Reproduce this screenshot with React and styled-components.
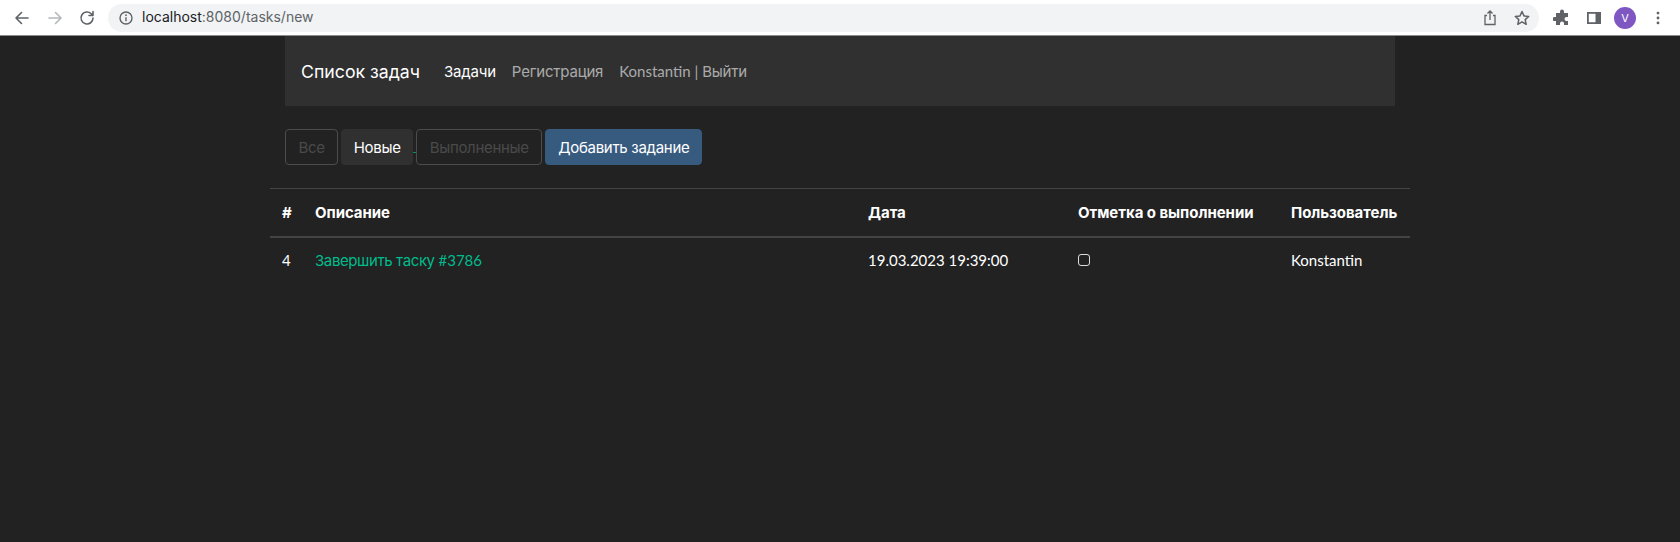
import React from 'react';
import styled, { createGlobalStyle } from 'styled-components';

const Global = createGlobalStyle`
  html, body { margin: 0; padding: 0; background: #222222; }
  body { font-family: Inter, "Noto Sans", sans-serif; font-size: 15px; color: #fff; height: 542px; overflow: hidden; }
  * { box-sizing: border-box; }
`;

const Chrome = styled.header`
  height: 36px; background: #fff; display: flex; align-items: center;
  border-bottom: 1px solid #8a8a8a; padding-left: 13px;
`;
const NavIcon = styled.svg`
  width: ${p => p.$size || 18}px; height: ${p => p.$size || 18}px; flex: none;
  color: ${p => p.$color || '#5f6368'}; margin-right: ${p => p.$gap ?? 0}px; display: block;
`;
const Omnibox = styled.div`
  margin-left: 12px; width: 1431px; height: 28px; border-radius: 14px; background: #f1f3f4;
  display: flex; align-items: center; padding-left: 10px; margin-right: 14px;
`;
const Url = styled.span`
  font-family: Inter, "Liberation Sans", sans-serif; font-size: 14px; color: #5f6368; margin-left: 8px; flex: 1;
  margin-top: -2px;
  b { font-weight: 400; color: #202124; }
`;
const Avatar = styled.div`
  width: 22px; height: 22px; border-radius: 50%; background: #7e57c2; color: #fff;
  font: 11px Inter, sans-serif; display: flex; align-items: center; justify-content: center;
  margin-right: 14px;
`;
const Container = styled.main`
  width: 1140px; margin: 0 auto; padding: 0 15px;
`;
const Navbar = styled.nav`
  height: 70px; background: #303030; display: flex; align-items: center; padding-left: 16px;
`;
const Brand = styled.a`
  font-size: 17.7px; color: #fff; margin-right: 24px;
`;
const NavLink = styled.a`
  font-size: 15px; letter-spacing: -0.2px; color: ${p => p.$active ? '#fff' : 'rgba(255,255,255,0.6)'}; margin-right: 16px;
`;
const Latin = styled.span`
  font-family: Lato, sans-serif; letter-spacing: 0;
`;
const Filters = styled.div`
  display: flex; margin-top: 23px; height: 36px;
`;
const FilterBtn = styled.button`
  font: inherit; letter-spacing: -0.3px; height: 36px; padding: 0 ${p => p.$pad ?? 12}px; border-radius: 4px; margin-right: ${p => p.$mr ?? 3}px;
  border: 1px solid ${p => p.$kind === 'primary' ? '#375a7f' : p.$kind === 'active' ? '#303030' : '#4c4c4c'};
  background: ${p => p.$kind === 'primary' ? '#375a7f' : p.$kind === 'active' ? '#303030' : 'transparent'};
  color: ${p => p.$kind === 'off' ? '#4a4a4a' : '#fff'};
`;
const LinkSeam = styled.span`
  width: 3px; height: 1px; background: #00bc8c; opacity: 0.7; align-self: flex-end; margin-bottom: 12px;
`;
const Table = styled.table`
  width: 1140px; margin: 23px 0 0 -15px; border-collapse: collapse; table-layout: fixed;
`;
const Th = styled.th`
  width: ${p => p.$w}px; text-align: left; font-weight: 700; height: 48px; padding: 0 12px; letter-spacing: -0.05px;
  border-top: 1px solid #444; border-bottom: 2px solid #444; white-space: nowrap;
`;
const Td = styled.td`
  height: 46px; padding: 0 12px; white-space: nowrap;
`;
const TaskLink = styled.a`color: #00bc8c; letter-spacing: -0.4px;`;
const Check = styled.span`
  display: block; width: 12px; height: 12px; border: 1px solid #ddd; border-radius: 3px;
`;

const Stroke = { fill: 'none', stroke: 'currentColor', strokeWidth: 1.6, strokeLinecap: 'round', strokeLinejoin: 'round' };

export default function App() {
  return (
    <>
      <Global />
      <Chrome>
        <NavIcon viewBox="0 0 18 18" $gap={15}><path {...Stroke} d="M15 9H3M8.5 3.5 3 9l5.5 5.5" /></NavIcon>
        <NavIcon viewBox="0 0 18 18" $gap={14} $color="#b5b7ba"><path {...Stroke} d="M3 9h12M9.500 3.500 15 9l-5.500 5.500" /></NavIcon>
        <NavIcon viewBox="0 0 18 18"><path {...Stroke} d="M15 9a6 6 0 1 1-1.800-4.300L15 6.500M15 2.500v4h-4" /></NavIcon>
        <Omnibox>
          <NavIcon viewBox="0 0 16 16" $size={16}>
            <circle cx="8" cy="8" r="6" fill="none" stroke="currentColor" strokeWidth="1.400" />
            <path d="M8 7.200v4" stroke="currentColor" strokeWidth="1.400" />
            <circle cx="8" cy="5.200" r="0.900" fill="currentColor" />
          </NavIcon>
          <Url><b>localhost</b>:8080/tasks/new</Url>
          <NavIcon viewBox="0 0 18 18" $gap={14}><path fill="none" stroke="currentColor" strokeWidth="1.300" d="M6 6.500H4v9h10v-9h-2M9 11V2M6.500 4.500 9 2l2.500 2.500" /></NavIcon>
          <NavIcon viewBox="0 0 18 18" $gap={8}><path fill="none" stroke="currentColor" strokeWidth="1.500" strokeLinejoin="round" d="m9 2.500 2 4.400 4.700.5-3.500 3.200 1 4.700L9 12.900l-4.200 2.400 1-4.700L2.300 7.400 7 6.900z" /></NavIcon>
        </Omnibox>
        <NavIcon viewBox="0 0 18 18" $gap={14}><path fill="currentColor" d="M7 2.500a2 2 0 0 1 4 0V4h4v4h-1.500a2 2 0 0 0 0 4H15v4h-4v-1.500a2 2 0 0 0-4 0V16H3v-4H1.500a2 2 0 0 1 0-4H3V4h4z" /></NavIcon>
        <NavIcon viewBox="0 0 18 18" $gap={11}><path fill="currentColor" fillRule="evenodd" d="M2 3h14v12H2zm1.800 1.800v8.400h6.700V4.800z" /></NavIcon>
        <Avatar>V</Avatar>
        <NavIcon viewBox="0 0 4 18" $size={16}><g fill="currentColor"><circle cx="2" cy="3.500" r="1.600" /><circle cx="2" cy="9" r="1.600" /><circle cx="2" cy="14.500" r="1.600" /></g></NavIcon>
      </Chrome>
      <Container>
        <Navbar>
          <Brand>Список задач</Brand>
          <NavLink $active>Задачи</NavLink>
          <NavLink>Регистрация</NavLink>
          <NavLink><Latin>Konstantin | </Latin>Выйти</NavLink>
        </Navbar>
        <Filters>
          <FilterBtn $kind="off" $pad={12.5}>Все</FilterBtn>
          <FilterBtn $kind="active" $mr={0} $pad={11.5}>Новые</FilterBtn>
          <LinkSeam />
          <FilterBtn $kind="off" $pad={12.5}>Выполненные</FilterBtn>
          <FilterBtn $kind="primary">Добавить задание</FilterBtn>
        </Filters>
        <Table>
          <thead>
            <tr>
              <Th $w={33}>#</Th>
              <Th $w={553}>Описание</Th>
              <Th $w={210}>Дата</Th>
              <Th $w={213}>Отметка о выполнении</Th>
              <Th $w={131}>Пользователь</Th>
            </tr>
          </thead>
          <tbody>
            <tr>
              <Td><Latin>4</Latin></Td>
              <Td><TaskLink>Завершить таску <Latin>#3786</Latin></TaskLink></Td>
              <Td><Latin>19.03.2023 19:39:00</Latin></Td>
              <Td><Check /></Td>
              <Td><Latin>Konstantin</Latin></Td>
            </tr>
          </tbody>
        </Table>
      </Container>
    </>
  );
}
